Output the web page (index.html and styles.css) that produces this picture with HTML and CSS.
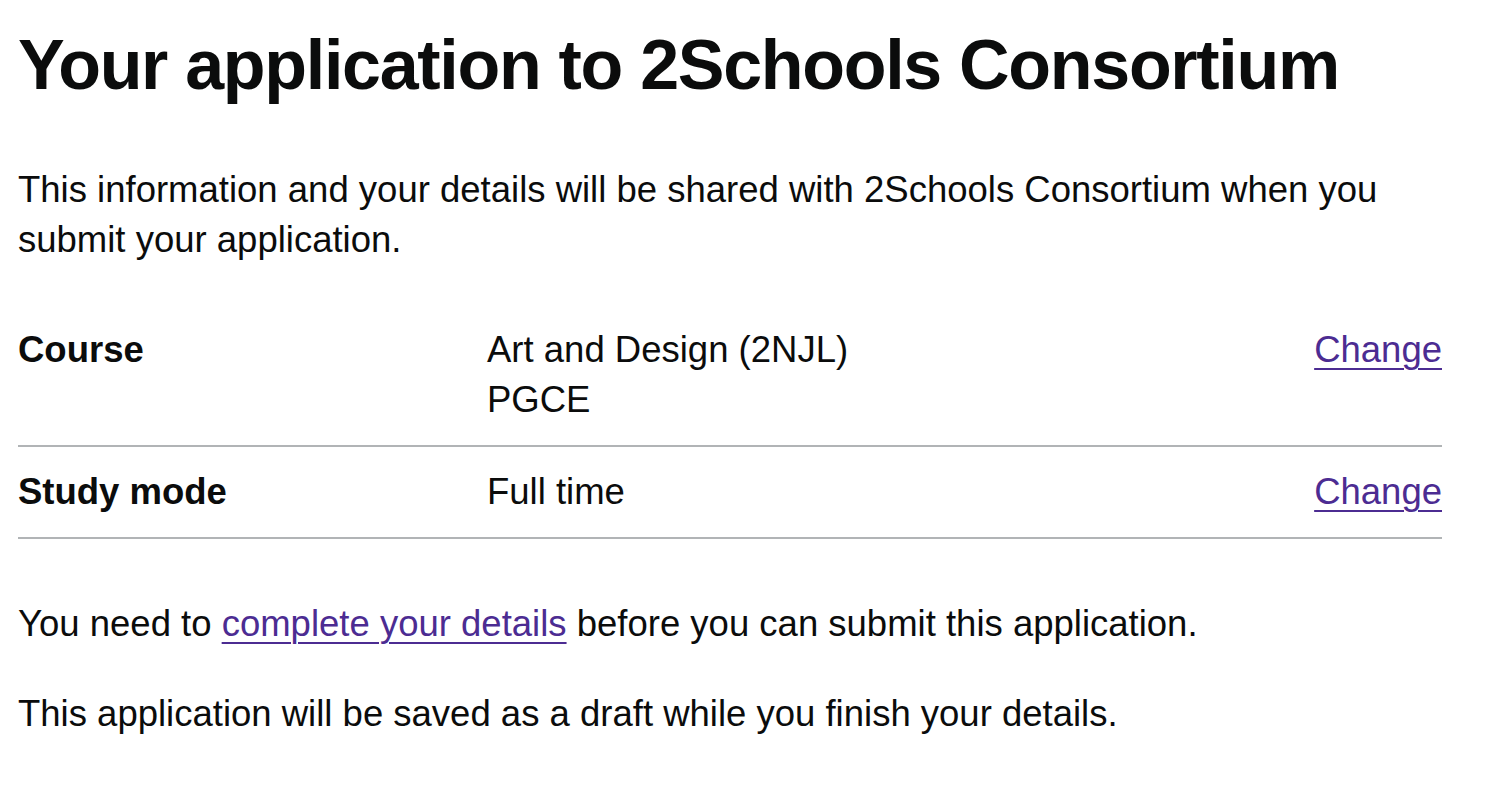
FILE: index.html
```html
<!DOCTYPE html>
<html lang="en">
<head>
<meta charset="utf-8">
<title>Your application to 2Schools Consortium</title>
<link rel="stylesheet" href="styles.css">
</head>
<body>
<main class="main">
  <h1 class="heading">Your application to 2Schools Consortium</h1>
  <p class="body">This information and your details will be shared with 2Schools Consortium when you submit your application.</p>
  <dl class="summary">
    <div class="summary-row">
      <dt class="summary-key">Course</dt>
      <dd class="summary-value">Art and Design (2NJL)<br>PGCE</dd>
      <dd class="summary-actions"><a class="link" href="#">Change</a></dd>
    </div>
    <div class="summary-row">
      <dt class="summary-key">Study mode</dt>
      <dd class="summary-value">Full time</dd>
      <dd class="summary-actions"><a class="link" href="#">Change</a></dd>
    </div>
  </dl>
  <p class="body">You need to <a class="link" href="#">complete your details</a> before you can submit this application.</p>
  <p class="body">This application will be saved as a draft while you finish your details.</p>
</main>
</body>
</html>
```
FILE: styles.css
```css
html, body {
  margin: 0;
  padding: 0;
  background: #ffffff;
}
body {
  font-family: "Liberation Sans", Arial, sans-serif;
  color: #0b0c0c;
}
.main {
  padding: 25px 56px 0 18px;
}
.heading {
  font-size: 70px;
  line-height: 80px;
  font-weight: 700;
  letter-spacing: -1.3px;
  margin: 0 0 60px;
}
.body {
  font-size: 36.5px;
  line-height: 50px;
  margin: 0 0 40px;
}
.link {
  color: #4c2c92;
  text-decoration: underline;
  text-decoration-thickness: 2px;
  text-underline-offset: 5.8px;
}
.summary {
  margin: 0 0 60px;
  font-size: 36.5px;
  line-height: 50px;
}
.summary-row {
  display: flex;
  border-bottom: 2px solid #b1b4b6;
}
.summary-key,
.summary-value,
.summary-actions {
  margin: 0;
  padding: 20px 0;
}
.summary-key {
  width: 469px;
  flex: none;
  font-weight: 700;
}
.summary-value {
  flex: 1;
}
.summary-actions {
  flex: none;
  text-align: right;
}
```
